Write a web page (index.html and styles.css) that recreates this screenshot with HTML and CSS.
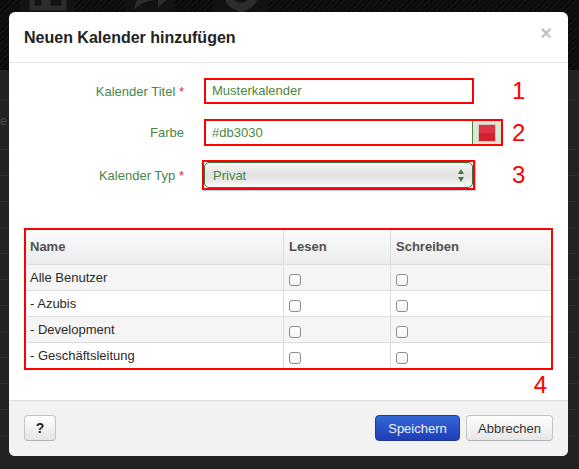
FILE: index.html
```html
<!DOCTYPE html>
<html lang="de">
<head>
<meta charset="utf-8">
<title>Neuen Kalender hinzufügen</title>
<link rel="stylesheet" href="styles.css">
</head>
<body>
<div class="page">
  <nav class="navbar">
    <div class="tile tile-1">
      <svg class="nav-icon" width="40" height="40" viewBox="0 0 40 40"><rect x="4" y="4" width="12" height="30" fill="none" stroke="#2c2c2c" stroke-width="5"/><rect x="20" y="4" width="16" height="30" fill="none" stroke="#2c2c2c" stroke-width="5"/></svg>
    </div>
    <div class="tile tile-2">
      <svg class="nav-icon" width="44" height="40" viewBox="0 0 44 40"><path d="M6 36 C8 22 18 16 30 16 L30 8 L42 22 L30 34 L30 26 C20 26 12 29 6 36 Z" fill="#2c2c2c"/></svg>
    </div>
    <div class="tile tile-3">
      <svg class="nav-icon" width="40" height="40" viewBox="0 0 40 40"><circle cx="20" cy="20" r="13" fill="none" stroke="#2c2c2c" stroke-width="8"/><path d="M17 2h6v8h-6zM17 30h6v8h-6zM2 17h8v6H2zM30 17h8v6h-8z" fill="#2c2c2c"/></svg>
    </div>
  </nav>
  <ul class="list">
    <li class="row r1"></li>
    <li class="row r2"><span class="row-text">e</span></li>
    <li class="row r3"></li>
    <li class="row r4"></li>
    <li class="row r5"></li>
    <li class="row r6"></li>
    <li class="row r7"></li>
    <li class="row r8"></li>
    <li class="row r9"></li>
    <li class="row r10"></li>
    <li class="row r11"></li>
    <li class="row r12"></li>
    <li class="row r13"></li>
  </ul>
</div>

<div class="modal">
  <div class="modal-header">
    <h3 class="modal-title">Neuen Kalender hinzufügen</h3>
    <span class="close">×</span>
  </div>

  <div class="modal-body">
    <div class="control-group cg-1">
      <label class="control-label">Kalender Titel <span class="req">*</span></label>
      <div class="controls">
        <div class="text-input title-input">Musterkalender</div>
      </div>
      <span class="marker">1</span>
    </div>

    <div class="control-group cg-2">
      <label class="control-label">Farbe</label>
      <div class="controls">
        <div class="color-input">
          <span class="color-value">#db3030</span>
          <span class="add-on"><span class="swatch"></span></span>
        </div>
      </div>
      <span class="marker">2</span>
    </div>

    <div class="control-group cg-3">
      <label class="control-label">Kalender Typ <span class="req">*</span></label>
      <div class="controls">
        <div class="select-box">
          <div class="select">
            <span class="select-value">Privat</span>
            <svg class="select-arrows" width="6" height="13" viewBox="0 0 6 13"><path d="M3 0L6 5H0Z M0 8H6L3 13Z" fill="#3f7b3f"/></svg>
          </div>
        </div>
      </div>
      <span class="marker">3</span>
    </div>

    <div class="table-box">
      <table class="perm-table">
        <colgroup>
          <col class="c-name"><col class="c-read"><col class="c-write">
        </colgroup>
        <thead>
          <tr><th>Name</th><th>Lesen</th><th>Schreiben</th></tr>
        </thead>
        <tbody>
          <tr class="odd"><td>Alle Benutzer</td><td><input type="checkbox"></td><td><input type="checkbox"></td></tr>
          <tr><td>- Azubis</td><td><input type="checkbox"></td><td><input type="checkbox"></td></tr>
          <tr class="odd"><td>- Development</td><td><input type="checkbox"></td><td><input type="checkbox"></td></tr>
          <tr><td>- Geschäftsleitung</td><td><input type="checkbox"></td><td><input type="checkbox"></td></tr>
        </tbody>
      </table>
    </div>
    <div class="marker-row"><span class="marker">4</span></div>
  </div>

  <div class="modal-footer">
    <button class="btn btn-help">?</button>
    <div class="actions">
      <button class="btn btn-primary">Speichern</button>
      <button class="btn btn-cancel">Abbrechen</button>
    </div>
  </div>
</div>
</body>
</html>
```

FILE: styles.css
```css
* { box-sizing: border-box; }

html, body {
  margin: 0;
  padding: 0;
}

body {
  width: 579px;
  height: 469px;
  overflow: hidden;
  background: #222222;
  font-family: "Liberation Sans", Arial, sans-serif;
  font-size: 13px;
  color: #333333;
  position: relative;
}

/* ---------- backdrop page ---------- */
.page {
  display: flex;
  flex-direction: column;
}

.navbar {
  height: 70px;
  display: flex;
  background: repeating-linear-gradient(-45deg, #0a0a0a 0 2px, #121212 2px 4px);
}

.tile {
  height: 70px;
  display: flex;
  justify-content: center;
  align-items: flex-start;
  background: #121212;
  overflow: hidden;
}
.tile-1 { width: 55px; margin-left: 20px; }
.tile-2 { width: 50px; margin-left: 50px; }
.tile-3 { width: 55px; margin-left: 38px; }

.nav-icon { margin-top: -26px; }

.list {
  list-style: none;
  margin: 0;
  padding: 0;
}
.row {
  height: 26px;
  background: #232323;
  border-bottom: 1px solid #2e2e2e;
  overflow: hidden;
}
.r1 { height: 31px; }
.r2 { height: 49px; }
.row-text {
  display: block;
  padding-left: 0;
  line-height: 40px;
  font-size: 13px;
  color: #4a4a4a;
}

/* ---------- modal ---------- */
.modal {
  position: absolute;
  left: 9px;
  top: 12px;
  width: 559px;
  height: 444px;
  background: #ffffff;
  border-radius: 6px;
  overflow: hidden;
  display: flex;
  flex-direction: column;
}

.modal-header {
  display: flex;
  justify-content: space-between;
  align-items: flex-start;
  height: 51px;
  padding: 16px 15px 0 15px;
  border-bottom: 1px solid #e5e5e5;
}

.modal-title {
  margin: 0;
  font-size: 16px;
  line-height: 20px;
  font-weight: bold;
  color: #222222;
}

.close {
  margin-top: -5px;
  margin-right: 1px;
  font-size: 20px;
  line-height: 20px;
  font-weight: bold;
  color: #c2c2c2;
}

.modal-body {
  flex: 1;
  padding: 15px 15px 0 15px;
}

/* form rows */
.control-group {
  display: flex;
  align-items: center;
}
.cg-1 { height: 26px; margin-bottom: 15px; }
.cg-2 { height: 27px; margin-bottom: 14px; }
.cg-3 { height: 30px; }

.control-label {
  width: 160px;
  text-align: right;
  color: #468847;
  font-size: 13px;
}
.req { color: #d42a2a; }

.controls {
  width: 308px;
  margin-left: 20px;
  display: flex;
}

.marker {
  font-size: 24px;
  line-height: 24px;
  color: #ff0000;
}

.text-input {
  height: 26px;
  border: 2px solid #ff0000;
  padding: 0 6px;
  line-height: 22px;
  color: #468847;
  font-size: 13px;
  background: #ffffff;
}
.title-input { width: 270px; }

.color-input {
  width: 299px;
  height: 27px;
  border: 2px solid #ff0000;
  display: flex;
  background: #ffffff;
}
.color-value {
  flex: 1;
  padding-left: 6px;
  line-height: 23px;
  color: #468847;
}
.add-on {
  width: 29px;
  background: #dbe8d3;
  border-left: 1px solid #468847;
  display: flex;
  align-items: center;
  justify-content: center;
}
.swatch {
  width: 18px;
  height: 18px;
  border: 1px solid #d7c3c3;
  background: linear-gradient(#dc3440 0 50%, #d22232 50% 100%);
}

.select-box {
  width: 273px;
  height: 30px;
  margin-left: -2px;
  border: 2px solid #ff0000;
  box-shadow: 1px 1px 0 #b4cdf3;
}
.select {
  height: 26px;
  border: 1px solid #3b6a3b;
  border-radius: 5px;
  display: flex;
  align-items: center;
  justify-content: space-between;
  padding: 0 8px 0 8px;
  background: linear-gradient(#f7f7f7 0%, #e2e2e2 45%, #e6e6e6 65%, #fbfbfb 100%);
  color: #468847;
  font-size: 13px;
}
.select-arrows { margin-top: 1px; }

/* table */
.table-box {
  margin-top: 38px;
  width: 529px;
  border: 2px solid #ff0000;
}

.perm-table {
  width: 525px;
  table-layout: fixed;
  border-collapse: separate;
  border-spacing: 0;
}
.c-name { width: 257px; }
.c-read { width: 107px; }
.c-write { width: 161px; }

.perm-table th {
  height: 34px;
  padding: 0 5px;
  text-align: left;
  font-weight: bold;
  color: #505050;
  line-height: 34px;
  background: linear-gradient(#fbfbfb, #ececec);
}
.perm-table td {
  height: 26px;
  padding: 0 5px;
  line-height: 25px;
  border-top: 1px solid #dddddd;
  background: #ffffff;
  color: #2a2a2a;
}
.perm-table tr.odd td { background: #f5f5f5; }
.perm-table th:first-child,
.perm-table td:first-child { padding-left: 4px; }
.perm-table th + th,
.perm-table td + td { border-left: 1px solid #dddddd; }

.perm-table input[type="checkbox"] {
  -webkit-appearance: none;
  appearance: none;
  width: 12px;
  height: 12px;
  margin: 0;
  vertical-align: -4px;
  border: 1px solid #8e8e8e;
  border-radius: 3px;
  background: linear-gradient(#ffffff, #f3f3f3);
}

.marker-row {
  margin-top: 3px;
  padding-right: 6px;
  text-align: right;
}

/* footer */
.modal-footer {
  height: 56px;
  padding: 14px 15px 0 15px;
  border-top: 1px solid #dddddd;
  background: #f2f2f2;
  display: flex;
  justify-content: space-between;
  align-items: flex-start;
}
.actions {
  display: flex;
  gap: 6px;
}

.btn {
  height: 26px;
  padding: 0;
  border: 1px solid #c4c4c4;
  border-bottom-color: #b3b3b3;
  border-radius: 4px;
  font-family: "Liberation Sans", Arial, sans-serif;
  font-size: 13px;
  color: #333333;
  text-align: center;
  background: linear-gradient(#ffffff, #e6e6e6);
}
.btn-help {
  width: 32px;
  font-weight: bold;
  font-size: 14px;
  color: #222222;
}
.btn-primary {
  width: 85px;
  color: #eef2fb;
  border-color: #1d3a9e;
  background: linear-gradient(#3468d6, #1f3db6);
}
.btn-cancel { width: 87px; }
```
